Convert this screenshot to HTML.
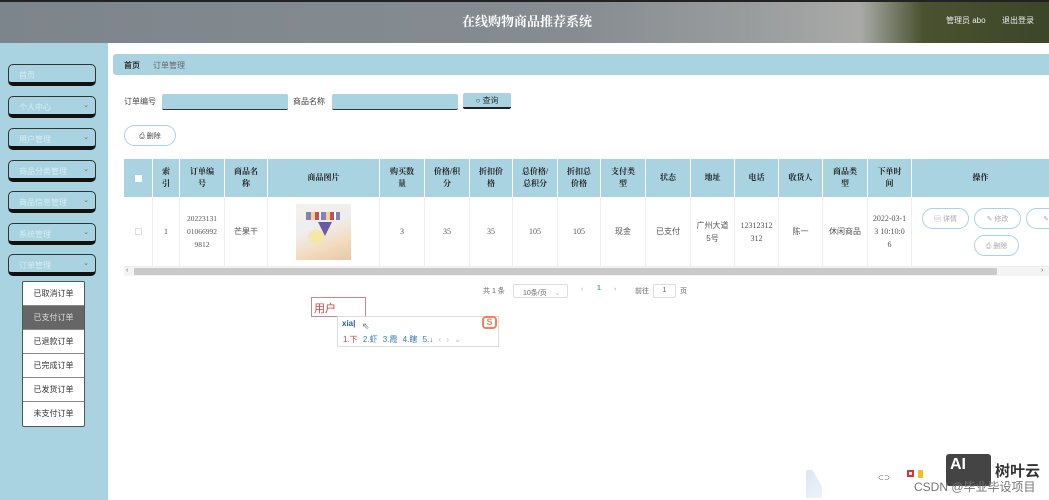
<!DOCTYPE html>
<html><head><meta charset="utf-8"><style>
*{margin:0;padding:0;box-sizing:border-box}
body{width:1049px;height:500px;overflow:hidden;position:relative;background:#fff;font-family:"Liberation Sans","Noto Sans CJK SC",sans-serif;font-size:8px;color:#444}
.a{position:absolute}
.hdr{left:0;top:0;width:1049px;height:43px;background:linear-gradient(90deg,#7d858c 0%,#868c91 55%,#9a9d9e 72%,#a9aaa8 82%,#4a5230 88%,#3c4628 100%);border-top:2px solid #222}
.side{left:0;top:43px;width:108px;height:457px;background:#a9d3e1}
.sb{left:8px;width:88px;height:22px;background:#a9d3e1;border:1px solid #333;border-bottom:4px solid #111;border-radius:5px;color:#d8edf3;font-size:8px;padding:5px 0 0 10px}
.sb i{position:absolute;right:6px;top:4px;font-style:normal;color:#667;font-size:7px}
.sub{left:22px;top:281px;width:63px;border:1px solid #555;background:#fff;border-radius:2px}
.sub div{height:24px;line-height:23px;text-align:center;font-size:8px;color:#333;border-bottom:1px solid #888}
.th{top:159px;height:38px;background:#a9d3e1;font-family:"Liberation Serif","Noto Serif CJK SC",serif;font-weight:bold;color:#222;display:flex;align-items:center;justify-content:center;text-align:center;font-size:8px;line-height:12px;border-right:1px solid #fff}
.td{top:197px;height:70px;display:flex;align-items:center;justify-content:center;text-align:center;font-size:8px;line-height:13px;color:#555;border-right:1px solid #eee;border-bottom:1px solid #eee}
.btn{border:1.5px solid #a9d3e1;border-radius:11px;height:21px;color:#aaa;font-size:7px;display:flex;align-items:center;justify-content:center}
</style></head><body>
<div class="a hdr"></div>
<div class="a" style="left:462px;top:11px;color:#fff;font-family:'Liberation Serif','Noto Serif CJK SC',serif;font-size:13px;font-weight:bold">在线购物商品推荐系统</div>
<div class="a" style="left:946px;top:15px;color:#eee;font-size:8px">管理员 abo</div>
<div class="a" style="left:1002px;top:15px;color:#eee;font-size:8px">退出登录</div>
<div class="a side"></div>
<div class="a sb" style="top:64px">首页</div>
<div class="a sb" style="top:96px">个人中心<i>⌄</i></div>
<div class="a sb" style="top:128px">用户管理<i>⌄</i></div>
<div class="a sb" style="top:160px">商品分类管理<i>⌄</i></div>
<div class="a sb" style="top:191px">商品信息管理<i>⌄</i></div>
<div class="a sb" style="top:223px">系统管理<i>⌄</i></div>
<div class="a sb" style="top:254px">订单管理<i>⌄</i></div>
<div class="a sub"><div>已取消订单</div><div style="background:#666;color:#ddd">已支付订单</div><div>已退款订单</div><div>已完成订单</div><div>已发货订单</div><div style="border:0">未支付订单</div></div>
<div class="a" style="left:113px;top:54px;width:936px;height:21px;background:#a9d3e1;border-radius:3px 0 0 3px"></div>
<div class="a" style="left:124px;top:60px;font-weight:bold;color:#333">首页</div>
<div class="a" style="left:153px;top:60px;color:#666">订单管理</div>
<div class="a" style="left:124px;top:96px;color:#444">订单编号</div>
<div class="a" style="left:162px;top:94px;width:126px;height:16px;background:#a9d3e1;border-bottom:1px solid #333;border-radius:2px"></div>
<div class="a" style="left:293px;top:96px;color:#444">商品名称</div>
<div class="a" style="left:332px;top:94px;width:126px;height:16px;background:#a9d3e1;border-bottom:1px solid #333;border-radius:2px"></div>
<div class="a" style="left:463px;top:93px;width:48px;height:16px;background:#a9d3e1;border-bottom:2px solid #222;border-radius:2px;text-align:center;line-height:15px;color:#333">○ 查询</div>
<div class="a btn" style="left:124px;top:125px;width:52px;color:#444;border-color:#a9d3e1">⎙ 删除</div>
<div class="a th" style="left:124px;width:29px"><span style="display:inline-block;width:7px;height:7px;background:#fff"></span></div>
<div class="a th" style="left:153px;width:27px">索<br>引</div>
<div class="a th" style="left:180px;width:45px">订单编<br>号</div>
<div class="a th" style="left:225px;width:43px">商品名<br>称</div>
<div class="a th" style="left:268px;width:112px">商品图片</div>
<div class="a th" style="left:380px;width:45px">购买数<br>量</div>
<div class="a th" style="left:425px;width:45px">价格/积<br>分</div>
<div class="a th" style="left:470px;width:43px">折扣价<br>格</div>
<div class="a th" style="left:513px;width:45px">总价格/<br>总积分</div>
<div class="a th" style="left:558px;width:43px">折扣总<br>价格</div>
<div class="a th" style="left:601px;width:45px">支付类<br>型</div>
<div class="a th" style="left:646px;width:45px">状态</div>
<div class="a th" style="left:691px;width:44px">地址</div>
<div class="a th" style="left:735px;width:44px">电话</div>
<div class="a th" style="left:779px;width:44px">收货人</div>
<div class="a th" style="left:823px;width:45px">商品类<br>型</div>
<div class="a th" style="left:868px;width:44px">下单时<br>间</div>
<div class="a th" style="left:912px;width:137px;border:0">操作</div>
<div class="a td" style="left:124px;width:29px"><span style="display:inline-block;width:7px;height:7px;border:1px solid #ddd"></span></div>
<div class="a td" style="left:153px;width:27px;font-family:'Liberation Serif',serif">1</div>
<div class="a td" style="left:180px;width:45px;font-family:'Liberation Serif',serif;font-size:7.5px">20223131<br>01066992<br>9812</div>
<div class="a td" style="left:225px;width:43px">芒果干</div>
<div class="a td" style="left:268px;width:112px"><div style="width:55px;height:56px;background:linear-gradient(160deg,#f6f0ea 0%,#eee 40%,#f3dcc0 70%,#e8c8a8 100%);position:relative"><div style="position:absolute;left:10px;top:8px;width:34px;height:8px;background:repeating-linear-gradient(90deg,#8a7fb5 0 5px,#f3d48a 5px 9px,#c0505a 9px 13px,#fff 13px 15px)"></div><div style="position:absolute;left:22px;top:18px;border-left:7px solid transparent;border-right:7px solid transparent;border-top:14px solid #6a5aa8"></div><div style="position:absolute;left:12px;top:26px;width:16px;height:14px;background:#f5e7a8;border-radius:50%"></div></div></div>
<div class="a td" style="left:380px;width:45px;font-family:'Liberation Serif',serif">3</div>
<div class="a td" style="left:425px;width:45px;font-family:'Liberation Serif',serif">35</div>
<div class="a td" style="left:470px;width:43px;font-family:'Liberation Serif',serif">35</div>
<div class="a td" style="left:513px;width:45px;font-family:'Liberation Serif',serif">105</div>
<div class="a td" style="left:558px;width:43px;font-family:'Liberation Serif',serif">105</div>
<div class="a td" style="left:601px;width:45px">现金</div>
<div class="a td" style="left:646px;width:45px">已支付</div>
<div class="a td" style="left:691px;width:44px">广州大道<br>5号</div>
<div class="a td" style="left:735px;width:44px;font-family:'Liberation Serif',serif">12312312<br>312</div>
<div class="a td" style="left:779px;width:44px">陈一</div>
<div class="a td" style="left:823px;width:45px">休闲商品</div>
<div class="a td" style="left:868px;width:44px;font-family:'Liberation Serif',serif">2022-03-1<br>3 10:10:0<br>6</div>
<div class="a td" style="left:912px;width:137px;border-right:0"></div>
<div class="a btn" style="left:922px;top:208px;width:47px">▤ 详情</div>
<div class="a btn" style="left:974px;top:208px;width:47px">✎ 修改</div>
<div class="a btn" style="left:1026px;top:208px;width:40px">✎</div>
<div class="a btn" style="left:974px;top:235px;width:45px">⎙ 删除</div>
<div class="a" style="left:124px;top:267px;width:925px;height:9px;background:#f4f4f4"></div>
<div class="a" style="left:134px;top:268px;width:863px;height:7px;background:#c9c9c9;border-radius:1px"></div>
<div class="a" style="left:126px;top:267px;font-size:7px;color:#666">‹</div>
<div class="a" style="left:1041px;top:267px;font-size:7px;color:#666">›</div>
<div class="a" style="left:483px;top:286px;font-size:7px;color:#666">共 1 条</div>
<div class="a" style="left:513px;top:284px;width:55px;height:14px;border:1px solid #ddd;border-radius:2px;font-size:7px;color:#666;padding:3px 0 0 9px">10条/页 <span style="color:#bbb;margin-left:6px">⌄</span></div>
<div class="a" style="left:581px;top:286px;font-size:7px;color:#aaa">‹</div>
<div class="a" style="left:597px;top:285px;font-size:7px;color:#4a9;font-weight:bold">1</div>
<div class="a" style="left:614px;top:286px;font-size:7px;color:#aaa">›</div>
<div class="a" style="left:635px;top:286px;font-size:7px;color:#666">前往</div>
<div class="a" style="left:653px;top:284px;width:23px;height:14px;border:1px solid #ddd;border-radius:2px;font-size:7px;color:#666;text-align:center;line-height:12px">1</div>
<div class="a" style="left:680px;top:286px;font-size:7px;color:#666">页</div>
<div class="a" style="left:311px;top:297px;width:55px;height:20px;border:1px solid #c88;color:#c44;font-size:11px;padding:2px 0 0 2px">用户</div>
<div class="a" style="left:337px;top:316px;width:162px;height:31px;border:1px solid #ddd;background:#fff"></div>
<div class="a" style="left:342px;top:319px;font-size:8px;color:#2a5aa0;font-weight:bold">xia|</div>
<div class="a" style="left:362px;top:321px;font-size:9px;color:#666">⇖</div>
<div class="a" style="left:482px;top:316px;width:15px;height:13px;border:2px solid #f08060;border-radius:4px;color:#f08060;font-size:9px;font-weight:bold;text-align:center;line-height:9px">S</div>
<div class="a" style="left:343px;top:334px;font-size:8px;color:#3a7ab0;word-spacing:3px;white-space:nowrap"><span style="color:#c44">1.下</span> 2.虾 3.霞 4.瞎 5.↓ <span style="color:#bbb">‹ › ⌄</span></div>
<div class="a" style="left:806px;top:470px;width:16px;height:28px;background:linear-gradient(135deg,#dbe6f3,#eef3fa);clip-path:polygon(0 0,40% 0,100% 60%,100% 100%,0 100%)"></div>
<div class="a" style="left:878px;top:473px;font-size:6px;color:#333">⊂⊃</div>
<div class="a" style="left:907px;top:470px;width:7px;height:7px;border:2px solid #d33"></div>
<div class="a" style="left:918px;top:470px;width:5px;height:8px;background:#f0c020"></div>
<div class="a" style="left:946px;top:454px;width:45px;height:32px;background:#444;border-radius:3px;color:#fff;font-weight:bold;font-size:16px;padding:2px 0 0 4px">AI</div>
<div class="a" style="left:995px;top:460px;font-size:15px;font-weight:bold;color:#333">树叶云</div>
<div class="a" style="left:914px;top:478px;font-size:12px;color:#777">CSDN @毕业毕设项目</div>
</body></html>
